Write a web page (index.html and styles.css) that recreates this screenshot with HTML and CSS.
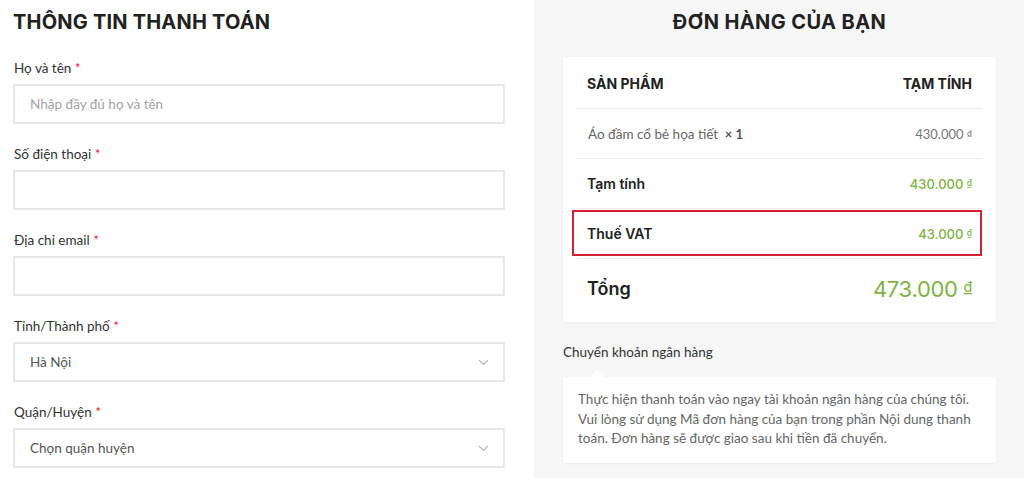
FILE: index.html
```html
<!DOCTYPE html>
<html lang="vi">
<head>
    <meta charset="UTF-8">
    <meta name="viewport" content="width=device-width, initial-scale=1.0">
    <title>Thanh toán</title>
    <link rel="stylesheet" href="styles.css">
</head>
<body>
    <div class="checkout">
        <form class="billing">
            <h2 class="title">THÔNG TIN THANH TOÁN</h2>

            <div class="field">
                <label for="name">Họ và tên <span class="req">*</span></label>
                <input type="text" id="name" placeholder="Nhập đầy đủ họ và tên">
            </div>
            <div class="field">
                <label for="phone">Số điện thoại <span class="req">*</span></label>
                <input type="text" id="phone">
            </div>
            <div class="field">
                <label for="email">Địa chỉ email <span class="req">*</span></label>
                <input type="text" id="email">
            </div>
            <div class="field">
                <label>Tỉnh/Thành phố <span class="req">*</span></label>
                <div class="select">
                    <span>Hà Nội</span>
                    <svg width="11" height="7" viewBox="0 0 11 7"><path d="M1 1l4.5 4.5L10 1" fill="none" stroke="#b5b5b5" stroke-width="1.2"/></svg>
                </div>
            </div>
            <div class="field">
                <label>Quận/Huyện <span class="req">*</span></label>
                <div class="select">
                    <span>Chọn quận huyện</span>
                    <svg width="11" height="7" viewBox="0 0 11 7"><path d="M1 1l4.5 4.5L10 1" fill="none" stroke="#b5b5b5" stroke-width="1.2"/></svg>
                </div>
            </div>
        </form>

        <div class="order">
            <h2 class="title center">ĐƠN HÀNG CỦA BẠN</h2>

            <div class="card">
                <div class="row head">
                    <span>SẢN PHẨM</span>
                    <span>TẠM TÍNH</span>
                </div>
                <div class="row item">
                    <span>Áo đầm cổ bẻ họa tiết <b>&nbsp;× 1</b></span>
                    <span class="price">430.000 <span class="cur">₫</span></span>
                </div>
                <div class="row sub">
                    <span>Tạm tính</span>
                    <span class="green">430.000 <span class="cur">₫</span></span>
                </div>
                <div class="row sub marked">
                    <span>Thuế VAT</span>
                    <span class="green">43.000 <span class="cur">₫</span></span>
                </div>
                <div class="row total">
                    <span>Tổng</span>
                    <span class="green">473.000 <span class="cur">₫</span></span>
                </div>
            </div>

            <div class="payment">
                <div class="pay-name">Chuyển khoản ngân hàng</div>
                <div class="pay-box">
                    Thực hiện thanh toán vào ngay tài khoản ngân hàng của chúng tôi. Vui lòng sử dụng Mã đơn hàng của bạn trong phần Nội dung thanh toán. Đơn hàng sẽ được giao sau khi tiền đã chuyển.
                </div>
            </div>
        </div>
    </div>
</body>
</html>
```

FILE: styles.css
```css
body { margin: 0; font-family: Lato, "Open Sans", sans-serif; font-size: 13.5px; color: #333; background: #fff; }
.checkout { display: grid; grid-template-columns: 534px 1fr; height: 478px; overflow: hidden; }

.title { font-family: Inter, "Liberation Sans", sans-serif; font-size: 20px; font-weight: 700; color: #222; margin: 9px 0 0; line-height: 26px; letter-spacing: 0.2px; }
.title.center { text-align: center; letter-spacing: 0.4px; }

.billing { padding: 0 29px 0 13px; }
.field { margin-top: 25px; }
.field + .field { margin-top: 22px; }
.field label { display: block; font-size: 13.5px; color: #333; line-height: 17px; margin-bottom: 7px; margin-left: 1px; }
.req { color: #e0243a; }
.field input, .select { box-sizing: border-box; width: 100%; height: 40px; border: 2px solid #e8e8e8; background: #fff; padding: 0 15px; font-family: Lato, sans-serif; font-size: 13.5px; color: #555; outline: none; }
.field input::placeholder { color: #a3a3a3; }
.select { display: flex; align-items: center; justify-content: space-between; color: #555; padding-right: 14px; }

.order { background: #f7f7f7; padding: 0 28px 0 29px; }
.card { background: #fff; margin-top: 22px; padding: 0 14px; box-shadow: 0 1px 3px rgba(0,0,0,0.05); }
.row { display: flex; justify-content: space-between; align-items: center; padding: 0 10px; border-bottom: 1px solid #ececec; position: relative; }
.row.head { height: 52px; padding-top: 2px; box-sizing: border-box; font-family: Inter, sans-serif; font-weight: 700; font-size: 14px; color: #222; }
.row.item { height: 49px; color: #666; font-size: 13.5px; padding-left: 11px; }
.row.item b { color: #555; font-weight: 700; font-size: 13px; }
.price { font-size: 13px; color: #777; }
.row.sub { height: 49px; font-family: Inter, sans-serif; font-weight: 600; font-size: 14px; color: #222; }
.row.total { height: 63px; padding-bottom: 4px; box-sizing: border-box; border-bottom: none; font-family: Inter, sans-serif; font-weight: 600; font-size: 18px; color: #222; }
.green { color: #7db443; font-family: Inter, sans-serif; font-size: 13px; font-weight: 500; }
.row.total .green { font-size: 22px; font-weight: 400; letter-spacing: -0.3px; }
.cur { font-size: 0.65em; text-decoration: underline; vertical-align: 0.35em; }
.marked::after { content: ""; position: absolute; left: -5px; right: 0; top: 1px; bottom: 2px; border: 2px solid #d4212f; }

.payment { margin-top: 22px; }
.pay-name { font-size: 13.5px; color: #333; line-height: 17px; }
.pay-box { position: relative; background: #fff; margin-top: 16px; padding: 13px 15px 14px; font-size: 13.5px; line-height: 19.5px; color: #666; box-shadow: 0 1px 3px rgba(0,0,0,0.04); }
.pay-box::before { content: ""; position: absolute; top: -7px; left: 27px; border: 7px solid transparent; border-top: none; border-bottom-color: #fff; }
```
